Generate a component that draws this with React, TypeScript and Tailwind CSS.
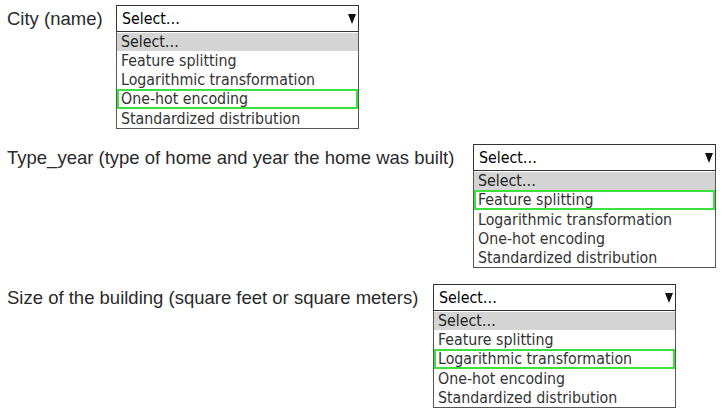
import React from "react";

const OPTIONS = ["Feature splitting", "Logarithmic transformation", "One-hot encoding", "Standardized distribution"];

function Dropdown({ width, selected }: { width: number; selected: number }) {
  return (
    <div className="flex flex-col" style={{ width }}>
      <div className="flex items-center justify-between h-[27px] border border-[#333] pl-[5px] pr-[2px] bg-white">
        <span className="text-[15.8px] text-black leading-none pt-[1px]">Select…</span>
        <svg width="8" height="11" viewBox="0 0 8 11"><path d="M0 1 L8 1 L4 11 Z" fill="#111" /></svg>
      </div>
      <div className="flex flex-col border border-t-0 border-[#555] bg-white">
        <div className="h-[18px] bg-[#d4d4d4] pl-[4px] text-[15.8px] leading-[18px] text-[#222] mt-[1px]">Select…</div>
        {OPTIONS.map((o, i) => (
          <div
            key={o}
            className={
              i === selected
                ? "h-[20px] border-2 border-[#3ee03e] pl-[2px] text-[15.8px] leading-[16px] text-[#333]"
                : "h-[19px] pl-[4px] text-[15.8px] leading-[19px] text-[#333]"
            }
          >
            {o}
          </div>
        ))}
      </div>
    </div>
  );
}

const dd = { fontFamily: "'DejaVu Sans Condensed', 'DejaVu Sans', sans-serif" };

export default function App() {
  return (
    <div className="w-[722px] h-[418px] bg-white relative overflow-hidden" style={{ fontFamily: "'Liberation Sans', Arial, sans-serif" }}>
      <div className="flex flex-col pt-[5px]">
        <div className="flex items-start">
          <div className="pl-[7px] w-[116px] text-[18.5px] text-[#2a2a2a] leading-[27px]">City (name)</div>
          <div style={dd}>
            <Dropdown width={243} selected={2} />
          </div>
        </div>
        <div className="flex items-start mt-[15px]">
          <div className="pl-[7px] w-[473px] text-[18.5px] text-[#2a2a2a] leading-[27px]">Type_year (type of home and year the home was built)</div>
          <div style={dd}>
            <Dropdown width={243} selected={0} />
          </div>
        </div>
        <div className="flex items-start mt-[16px]">
          <div className="pl-[7px] w-[433px] text-[18.5px] text-[#2a2a2a] leading-[27px]">Size of the building (square feet or square meters)</div>
          <div style={dd}>
            <Dropdown width={243} selected={1} />
          </div>
        </div>
      </div>
    </div>
  );
}
